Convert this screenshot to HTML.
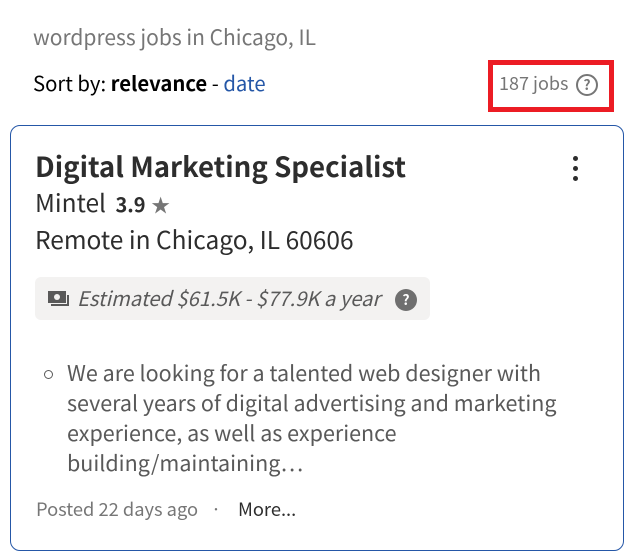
<!DOCTYPE html>
<html><head><style>
body{margin:0;width:633px;height:560px;background:#fff;font-family:"Noto Sans CJK JP","Liberation Sans",sans-serif;position:relative;overflow:hidden;color:#2d2d2d}
.a{position:absolute;white-space:nowrap;line-height:1}
</style></head><body>
<div class="a" style="left:33px;top:27px;font-size:21px;color:#767676">wordpress jobs in Chicago, IL</div>
<div class="a" style="left:33px;top:72px;font-size:20.3px;color:#000">Sort by: <b>relevance</b> - <span style="color:#2557a7">date</span></div>
<div class="a" style="left:488px;top:60px;width:116px;height:42px;border:5px solid #ec1c24"></div>
<div class="a" style="left:499px;top:74px;font-size:18px;color:#767676">187 jobs</div>
<div class="a" style="left:576px;top:74px;width:22px;height:22px;border:2px solid #767676;border-radius:50%;box-sizing:border-box;font-size:14px;font-weight:bold;color:#767676;text-align:center;line-height:19px">?</div>
<div class="a" style="left:10px;top:125px;width:612px;height:424px;border:1px solid #2557a7;border-radius:10px"></div>
<div class="a" style="left:35px;top:152px;font-size:27.6px;font-weight:bold;color:#2d2d2d">Digital Marketing Specialist</div>
<div class="a" style="left:573px;top:156px;width:5px;height:5px;border-radius:50%;background:#2d2d2d;box-shadow:0 10px 0 #2d2d2d,0 20px 0 #2d2d2d"></div>
<div class="a" style="left:35px;top:191px;font-size:24.5px">Mintel <b style="font-size:20px;margin-left:4px">3.9</b> <span style="font-size:19px;color:#767676">★</span></div>
<div class="a" style="left:35px;top:228px;font-size:24.5px">Remote in Chicago, IL 60606</div>
<div class="a" style="left:35px;top:277px;width:395px;height:43px;background:#f3f2f1;border-radius:6px"></div>
<svg class="a" style="left:47px;top:290px" width="24" height="18" viewBox="0 0 24 18"><rect x="1" y="1" width="18" height="12" fill="#595959"/><circle cx="10" cy="7" r="3" fill="#f3f2f1"/><path d="M21 5v10H4" stroke="#595959" stroke-width="2" fill="none"/></svg>
<div class="a" style="left:77px;top:288px;font-size:20.2px;font-style:italic;color:#595959">Estimated $61.5K - $77.9K a year</div>
<div class="a" style="left:395px;top:289px;width:22px;height:22px;border-radius:50%;background:#6f6f6f;color:#fff;font-size:14px;font-weight:bold;text-align:center;line-height:22px">?</div>
<div class="a" style="left:44px;top:370px;width:7px;height:7px;border:1.5px solid #595959;border-radius:50%"></div>
<div class="a" style="left:67px;top:358px;font-size:21.5px;line-height:30px;color:#595959;white-space:normal;width:500px">We are looking for a talented web designer with several years of digital advertising and marketing experience, as well as experience building/maintaining…</div>
<div class="a" style="left:36px;top:500px;font-size:18.3px;color:#767676">Posted 22 days ago</div>
<div class="a" style="left:211px;top:500px;font-size:18px;color:#767676">·</div>
<div class="a" style="left:238px;top:500px;font-size:18.3px;color:#2d2d2d">More...</div>
</body></html>
